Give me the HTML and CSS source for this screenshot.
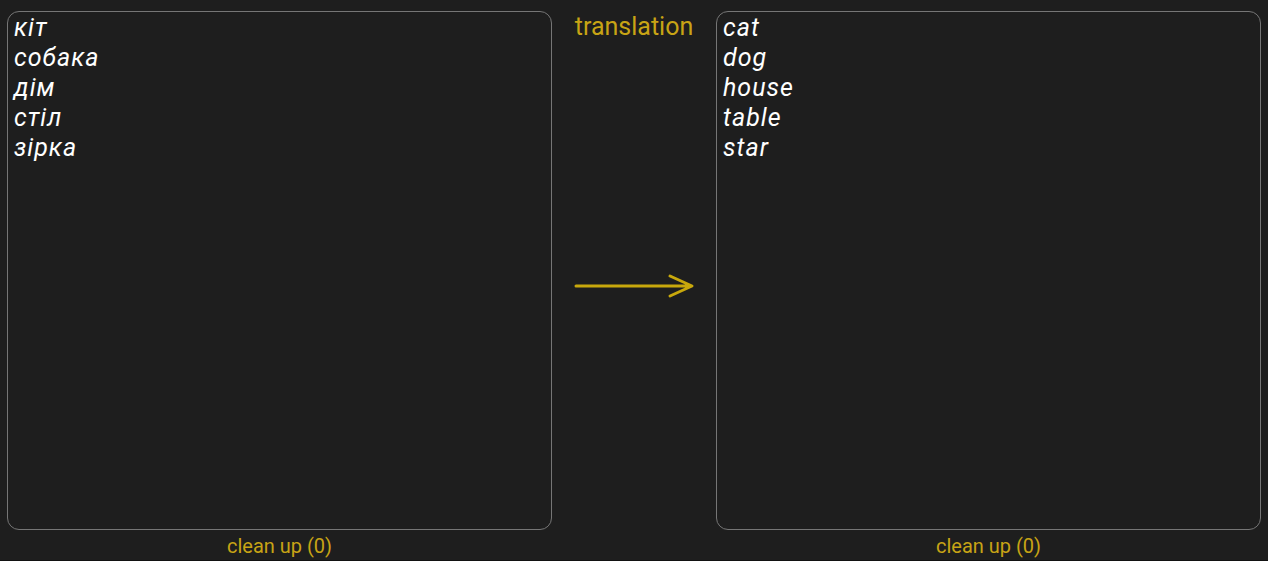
FILE: index.html
```html
<!DOCTYPE html>
<html lang="en">
<head>
<meta charset="utf-8">
<title>Translation</title>
<link rel="stylesheet" href="styles.css">
</head>
<body>
<main class="translator">
  <section class="panel">
    <textarea class="words" aria-label="Source words" spellcheck="false">кіт
собака
дім
стіл
зірка</textarea>
    <button class="clean" type="button">clean up (0)</button>
  </section>
  <div class="middle">
    <button class="translate" type="button">translation</button>
    <svg class="arrow" viewBox="0 0 120 26" aria-hidden="true"><path d="M2 13H117M96 3L118 13L96 23"/></svg>
  </div>
  <section class="panel">
    <textarea class="words" aria-label="Translated words" spellcheck="false">cat
dog
house
table
star</textarea>
    <button class="clean" type="button">clean up (0)</button>
  </section>
</main>
</body>
</html>
```
FILE: styles.css
```css
* {
  box-sizing: border-box;
}

body {
  margin: 0;
  background: #1e1e1e;
  font-family: Roboto, sans-serif;
  color: #c8a415;
}

.translator {
  display: flex;
  height: 100vh;
  padding: 11px 7px 0;
  border-bottom: 1px solid #121212;
}

.panel {
  display: flex;
  flex: 1;
  flex-direction: column;
  align-items: center;
  min-width: 0;
}

.words {
  flex: 1;
  width: 100%;
  padding: 1px 6px;
  border: 1px solid #767676;
  border-radius: 12px;
  outline: none;
  resize: none;
  background: transparent;
  color: #fff;
  font: italic 400 25px/30px Roboto, sans-serif;
  letter-spacing: 1px;
}

button {
  padding: 0;
  border: 0;
  background: none;
  color: inherit;
  font-family: inherit;
  cursor: pointer;
}

.clean {
  height: 30px;
  padding-top: 2px;
  font-size: 20px;
  line-height: 28px;
}

.middle {
  display: grid;
  grid-template-rows: 32px 1fr 32px;
  justify-items: center;
  align-items: center;
  width: 164px;
}

.translate {
  font-size: 25px;
  line-height: 32px;
}

.arrow {
  width: 120px;
  height: 26px;
  fill: none;
  stroke: #c8a80c;
  stroke-width: 3;
  stroke-linecap: round;
  stroke-linejoin: round;
}
```
